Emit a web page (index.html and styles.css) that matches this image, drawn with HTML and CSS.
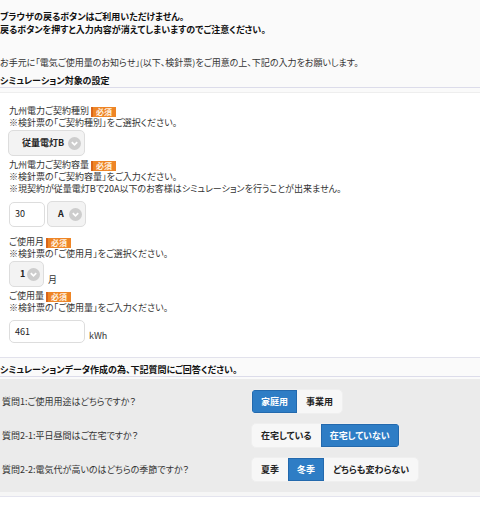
FILE: index.html
```html
<!DOCTYPE html>
<html lang="ja">
<head>
  <meta charset="UTF-8" />
  <meta name="viewport" content="width=device-width, initial-scale=1" />
  <title>電気料金シミュレーション</title>
  <link rel="stylesheet" href="styles.css">
</head>
<body>
  <div class="notice">
    <p>ブラウザの戻るボタンはご利用いただけません。</p>
    <p>戻るボタンを押すと入力内容が消えてしまいますのでご注意ください。</p>
  </div>

  <p class="lead">お手元に「電気ご使用量のお知らせ」(以下、検針票)をご用意の上、下記の入力をお願いします。</p>

  <h2 class="sec-title">シミュレーション対象の設定</h2>

  <div class="panel">
    <div class="field">
      <div class="label">九州電力ご契約種別 <span class="req">必須</span></div>
      <div class="note">※検針票の「ご契約種別」をご選択ください。</div>
      <div class="controls">
        <div class="select select-type">従量電灯B <span class="chev"><svg viewBox="0 0 13 13" width="13" height="13"><circle cx="6.5" cy="6.5" r="6.5" fill="#cdcdcd"/><path d="M3.8 5.2 L6.5 7.9 L9.2 5.2" fill="none" stroke="#fff" stroke-width="1.7"/></svg></span></div>
      </div>
    </div>

    <div class="field field-input">
      <div class="label">九州電力ご契約容量 <span class="req">必須</span></div>
      <div class="note">※検針票の「ご契約容量」をご入力ください。</div>
      <div class="note">※現契約が従量電灯Bで20A以下のお客様はシミュレーションを行うことが出来ません。</div>
      <div class="controls controls-input">
        <div class="input input-sm">30</div>
        <div class="select select-amp">A <span class="chev"><svg viewBox="0 0 13 13" width="13" height="13"><circle cx="6.5" cy="6.5" r="6.5" fill="#cdcdcd"/><path d="M3.8 5.2 L6.5 7.9 L9.2 5.2" fill="none" stroke="#fff" stroke-width="1.7"/></svg></span></div>
      </div>
    </div>

    <div class="field">
      <div class="label">ご使用月 <span class="req">必須</span></div>
      <div class="note">※検針票の「ご使用月」をご選択ください。</div>
      <div class="controls">
        <div class="select select-month">1 <span class="chev"><svg viewBox="0 0 13 13" width="13" height="13"><circle cx="6.5" cy="6.5" r="6.5" fill="#cdcdcd"/><path d="M3.8 5.2 L6.5 7.9 L9.2 5.2" fill="none" stroke="#fff" stroke-width="1.7"/></svg></span></div>
        <span class="unit">月</span>
      </div>
    </div>

    <div class="field field-input">
      <div class="label">ご使用量 <span class="req">必須</span></div>
      <div class="note">※検針票の「ご使用量」をご入力ください。</div>
      <div class="controls controls-input">
        <div class="input input-md">461</div>
        <span class="unit">kWh</span>
      </div>
    </div>
  </div>

  <h2 class="sec-title">シミュレーションデータ作成の為、下記質問にご回答ください。</h2>

  <div class="questions">
    <div class="q-row">
      <div class="q-text">質問1:ご使用用途はどちらですか？</div>
      <div class="toggle">
        <span class="on">家庭用</span>
        <span>事業用</span>
      </div>
    </div>
    <div class="q-row">
      <div class="q-text">質問2-1:平日昼間はご在宅ですか？</div>
      <div class="toggle">
        <span>在宅している</span>
        <span class="on">在宅していない</span>
      </div>
    </div>
    <div class="q-row">
      <div class="q-text">質問2-2:電気代が高いのはどちらの季節ですか？</div>
      <div class="toggle">
        <span>夏季</span>
        <span class="on">冬季</span>
        <span>どちらも変わらない</span>
      </div>
    </div>
  </div>

  <div class="foot"></div>
  <div class="tail"></div>
</body>
</html>
```

FILE: styles.css
```css
* {
  box-sizing: border-box;
}

body {
  margin: 0;
  background: #fafafa;
  color: #333;
  font-family: "Noto Sans CJK JP", "Noto Sans", sans-serif;
  font-size: 9px;
  line-height: 11px;
  font-feature-settings: "palt";
}

p {
  margin: 0;
}

.notice {
  padding-top: 10px;
  font-weight: bold;
  color: #111;
  line-height: 13px;
}

.lead {
  margin-top: 20px;
  line-height: 13px;
}

.sec-title {
  margin: 6px 0 0;
  font-size: 9px;
  font-weight: bold;
  color: #111;
  line-height: 11px;
  padding-bottom: 1px;
  border-bottom: 1px solid #dcdcea;
}

.panel {
  background: #fff;
  margin-top: 4px;
  border-top: 1px solid #eeeeee;
  border-bottom: 1px solid #e2e2ec;
  padding: 12px 9px 14px;
  line-height: 12px;
}

.field {
  margin-bottom: 3px;
}

.field-input {
  margin-bottom: 9px;
}

.field:last-child {
  margin-bottom: 0;
}

.req {
  display: inline-block;
  background: #ee8526;
  color: #fff4e4;
  font-size: 8px;
  font-weight: bold;
  line-height: 10px;
  padding: 0 4px 0 3px;
  vertical-align: middle;
  border-left: 2px solid #d9661a;
}

.controls {
  display: flex;
  align-items: center;
  gap: 2px;
  margin-top: 1px;
}

.controls-input {
  margin-top: 6px;
}

.select {
  display: flex;
  align-items: center;
  justify-content: space-between;
  height: 26px;
  padding: 0 3px 0 10px;
  background: #f3f3f3;
  border: 1px solid #dddddd;
  border-radius: 5px;
  font-weight: bold;
  color: #222;
}

.select-type {
  width: 77px;
  padding-left: 13px;
  margin-left: -1px;
}

.select-amp {
  width: 39px;
}

.select-month {
  width: 35px;
}

.chev {
  display: flex;
}

.input {
  display: flex;
  align-items: center;
  height: 25px;
  padding: 0 5px;
  background: #fff;
  border: 1px solid #dddddd;
  border-radius: 5px;
  color: #222;
}

.input-sm {
  width: 36px;
}

.input-md {
  width: 76px;
  height: 23px;
}

.unit {
  align-self: flex-end;
  margin-left: 2px;
  margin-bottom: 1px;
}

.questions {
  background: #ebebeb;
  margin-top: 2px;
  padding: 10px 0;
  display: flex;
  flex-direction: column;
  gap: 9px;
}

.q-row {
  display: flex;
  align-items: center;
}

.q-text {
  width: 251px;
  padding-left: 2px;
}

.toggle {
  display: flex;
  height: 25px;
  background: #f7f7f7;
  border: 1px solid #efefef;
  border-radius: 5px;
  overflow: hidden;
}

.toggle span {
  display: flex;
  align-items: center;
  padding: 0 9px;
  font-weight: bold;
  color: #222;
}

.toggle .on {
  background: #2e7dc5;
  color: #fff;
  box-shadow: inset 0 0 0 1px #2369ad;
}

.foot {
  height: 5px;
  background: #f6f6f6;
  border-bottom: 1px solid #e4e4ee;
}

.tail {
  height: 20px;
  background: #fff;
}
```
